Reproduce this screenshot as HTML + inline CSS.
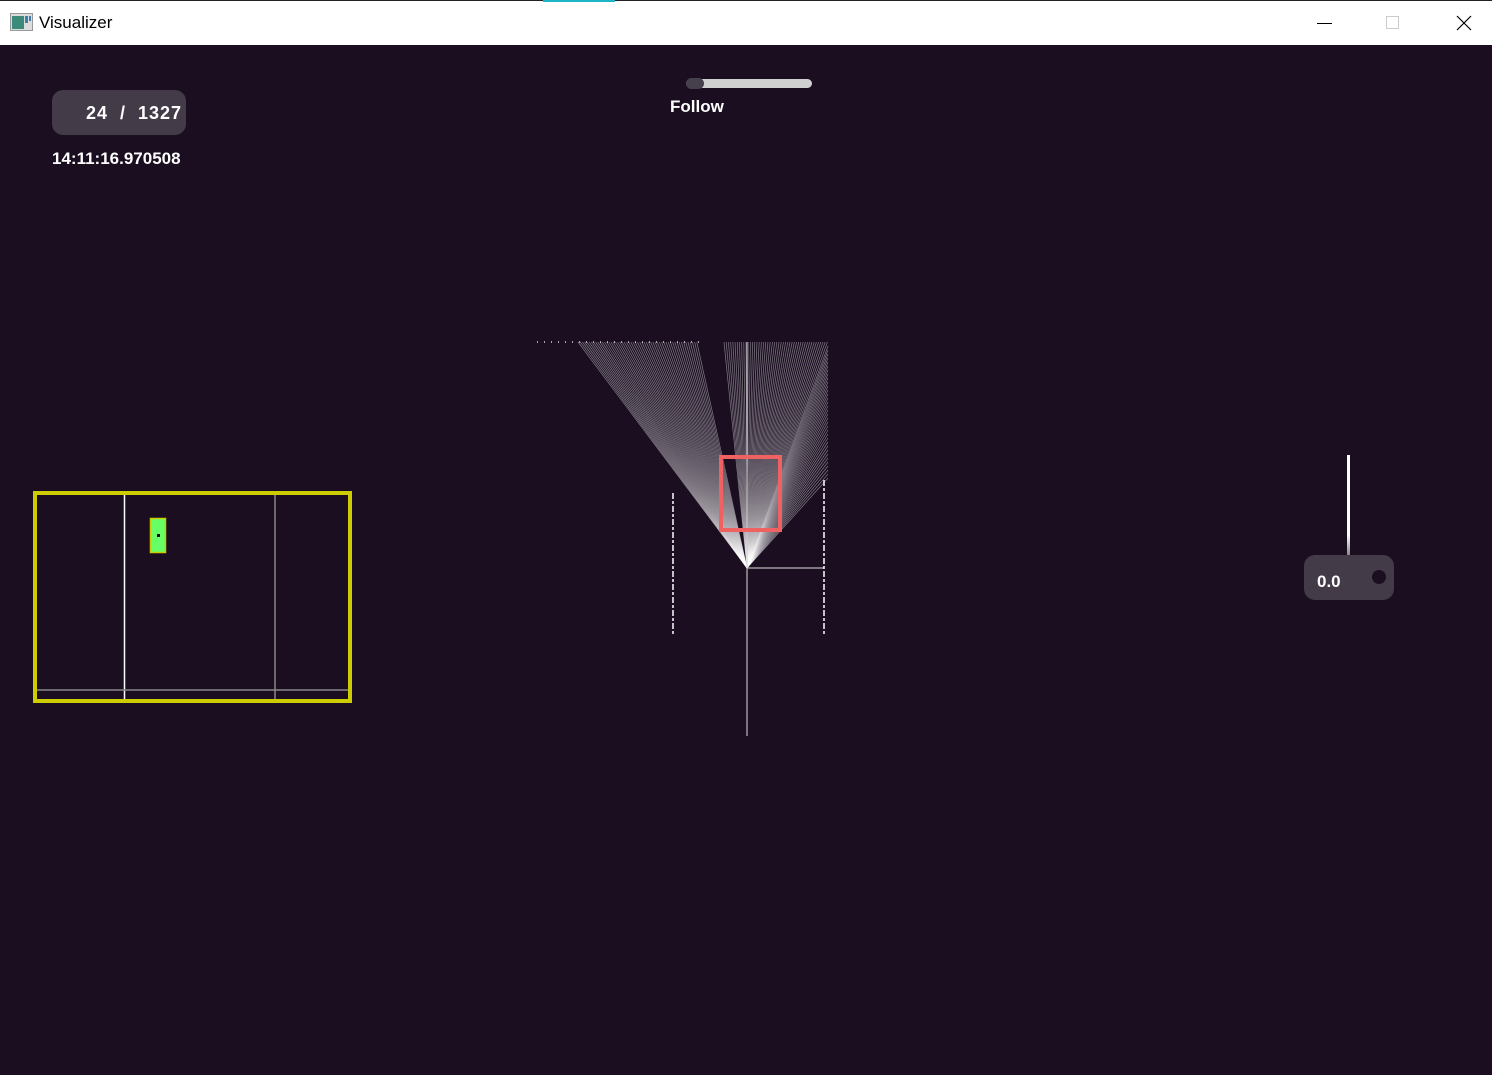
<!DOCTYPE html>
<html><head><meta charset="utf-8"><style>
html,body{margin:0;padding:0;width:1492px;height:1075px;overflow:hidden;background:#1a0e20;font-family:"Liberation Sans",sans-serif}
#tb{position:absolute;left:0;top:0;width:1492px;height:45px;background:#fff;border-top:1px solid #222;box-sizing:border-box}
#tb .t{position:absolute;left:39px;top:12px;font-size:17px;color:#000}
.lbl{position:absolute;color:#fff;font-weight:bold;font-family:"Liberation Sans",sans-serif}
</style></head><body>
<div id="tb">
<div style="position:absolute;left:543px;top:-1px;width:72px;height:2px;background:#1fb5c8"></div>
<svg style="position:absolute;left:10px;top:12px" width="23" height="18"><rect x="0.5" y="0.5" width="22" height="17" fill="#ddd" stroke="#999"/><rect x="2" y="3" width="12" height="13" fill="#3c8a7a"/><rect x="15" y="3" width="3" height="7" fill="#3a7fb0"/><rect x="19" y="3" width="2" height="5" fill="#3a7fb0"/></svg>
<div class="t">Visualizer</div>
<div style="position:absolute;left:1317px;top:22px;width:15px;height:1px;background:#000"></div>
<div style="position:absolute;left:1386px;top:15px;width:13px;height:13px;border:1px solid #ccc;box-sizing:border-box"></div>
<svg style="position:absolute;left:1456px;top:14px" width="16" height="16"><path d="M1 1L15 15M15 1L1 15" stroke="#000" stroke-width="1.2"/></svg>
</div>
<div style="position:absolute;left:52px;top:90px;width:134px;height:45px;border-radius:11px;background:#433b48"></div>
<div class="lbl" style="left:86px;top:103px;font-size:18px;letter-spacing:1px">24 &nbsp;/&nbsp; 1327</div>
<div class="lbl" style="left:52px;top:149px;font-size:17px">14:11:16.970508</div>
<div style="position:absolute;left:686px;top:79px;width:126px;height:9px;border-radius:5px;background:#d0d0d0"></div>
<div style="position:absolute;left:686px;top:78px;width:18px;height:11px;border-radius:6px;background:#46404c"></div>
<div class="lbl" style="left:670px;top:97px;font-size:17px">Follow</div>
<div style="position:absolute;left:1347px;top:455px;width:3px;height:100px;background:linear-gradient(#fff 80%,#888)"></div>
<div style="position:absolute;left:1304px;top:555px;width:90px;height:45px;border-radius:11px;background:#433b48"></div>
<div style="position:absolute;left:1372px;top:570px;width:14px;height:14px;border-radius:50%;background:#1a0e20"></div>
<div class="lbl" style="left:1317px;top:572px;font-size:17px">0.0</div>
<svg id="s" style="position:absolute;left:0;top:0" width="1492" height="1075">
<g id="rays" stroke="#fff" stroke-opacity="0.45" stroke-width="0.7"></g>
<path d="M747 342V568" stroke="#ccc" stroke-width="1"/>
<path d="M747 568H824M747 568V736" stroke="#ddd" stroke-width="1"/>
<path d="M673 493V636" stroke="#fff" stroke-width="1.5" stroke-dasharray="6 2 3 2"/>
<path d="M824 480V636" stroke="#fff" stroke-width="1.5" stroke-dasharray="6 2 3 2"/>
<path d="M537 342H700" stroke="#fff" stroke-width="1.2" stroke-dasharray="1 6"/>
<rect x="721" y="457" width="59" height="73" fill="none" stroke="#f06262" stroke-width="4"/>
<rect x="35" y="493" width="315" height="208" fill="none" stroke="#cccc00" stroke-width="4"/>
<path d="M124.5 495V699" stroke="#fff" stroke-width="1.5"/>
<path d="M275 495V699" stroke="#888" stroke-width="1.5"/>
<path d="M37 690H348" stroke="#888" stroke-width="1.5"/>
<rect x="150.5" y="518.5" width="15" height="34" fill="#66ff66" stroke="#cccc00" stroke-width="1.5"/>
<rect x="157" y="534" width="3" height="3" fill="#000"/>
</svg>
<script>
var g=document.getElementById('rays'),h='';
function L(x,y){h+='<line x1="747" y1="568" x2="'+x+'" y2="'+y+'"/>';}
for(var x=578;x<=698;x+=2.2)L(x,342);
for(var x=724;x<=828;x+=2.2)L(x,342);
for(var y=346;y<=480;y+=4)L(828,y);
g.innerHTML=h;
</script>
</body></html>
